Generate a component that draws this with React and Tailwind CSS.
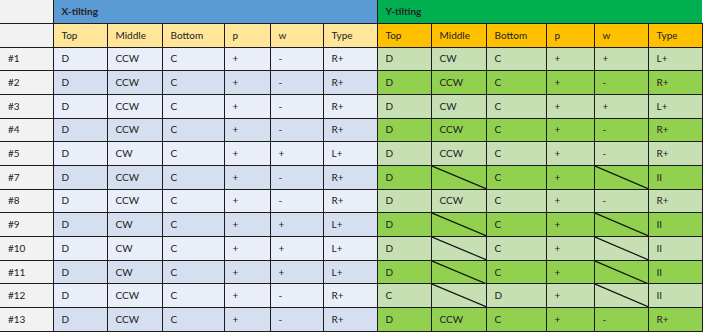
const xRows = [
  ['#1', 'D', 'CCW', 'C', '+', '-', 'R+'],
  ['#2', 'D', 'CCW', 'C', '+', '-', 'R+'],
  ['#3', 'D', 'CCW', 'C', '+', '-', 'R+'],
  ['#4', 'D', 'CCW', 'C', '+', '-', 'R+'],
  ['#5', 'D', 'CW', 'C', '+', '+', 'L+'],
  ['#7', 'D', 'CCW', 'C', '+', '-', 'R+'],
  ['#8', 'D', 'CCW', 'C', '+', '-', 'R+'],
  ['#9', 'D', 'CW', 'C', '+', '+', 'L+'],
  ['#10', 'D', 'CW', 'C', '+', '+', 'L+'],
  ['#11', 'D', 'CW', 'C', '+', '+', 'L+'],
  ['#12', 'D', 'CCW', 'C', '+', '-', 'R+'],
  ['#13', 'D', 'CCW', 'C', '+', '-', 'R+'],
]

// null = cell crossed out with a diagonal
const yRows = [
  ['D', 'CW', 'C', '+', '+', 'L+'],
  ['D', 'CCW', 'C', '+', '-', 'R+'],
  ['D', 'CW', 'C', '+', '+', 'L+'],
  ['D', 'CCW', 'C', '+', '-', 'R+'],
  ['D', 'CCW', 'C', '+', '-', 'R+'],
  ['D', null, 'C', '+', null, 'II'],
  ['D', 'CCW', 'C', '+', '-', 'R+'],
  ['D', null, 'C', '+', null, 'II'],
  ['D', null, 'C', '+', null, 'II'],
  ['D', null, 'C', '+', null, 'II'],
  ['C', null, 'D', '+', null, 'II'],
  ['D', 'CCW', 'C', '+', '-', 'R+'],
]

const heads = ['Top', 'Middle', 'Bottom', 'p', 'w', 'Type']
const widths = [53, 54, 55, 62, 46, 53, 54, 54, 55, 60, 48, 54, 54]

function Slash() {
  return (
    <svg className="absolute inset-0 w-full h-full" viewBox="0 0 100 100" preserveAspectRatio="none">
      <line x1="0" y1="0" x2="100" y2="100" stroke="#111" strokeWidth="1.2" vectorEffect="non-scaling-stroke" />
    </svg>
  )
}

export default function App() {
  const cell = 'relative border-r border-b border-[#1c1c1c] pl-2 text-left align-middle whitespace-nowrap'
  return (
    <div className="w-[703px] h-[333px] bg-white overflow-hidden text-[10px] text-[#222]" style={{ fontFamily: 'Lato, "Open Sans", sans-serif' }}>
      <table className="table-fixed border-collapse w-[702px]">
        <colgroup>
          {widths.map((w, i) => <col key={i} style={{ width: w }} />)}
        </colgroup>
        <tbody>
          <tr className="h-[23px]">
            <td className="border-r border-b border-[#1c1c1c] bg-[#f2f2f2]"></td>
            <td colSpan={6} className="border-r border-b border-[#1c1c1c] bg-[#5b9bd5] pl-2 font-bold">X-tilting</td>
            <td colSpan={6} className="border-b border-[#1c1c1c] bg-[#00b050] pl-2 font-bold">Y-tilting</td>
          </tr>
          <tr className="h-[24px]">
            <td className={`${cell} bg-[#f2f2f2]`}></td>
            {heads.map(h => <td key={'x' + h} className={`${cell} bg-[#ffe699]`}>{h}</td>)}
            {heads.map(h => <td key={'y' + h} className={`${cell} bg-[#ffc000]`}>{h}</td>)}
          </tr>
          {xRows.map((r, i) => {
            const odd = i % 2 === 1
            const xBg = odd ? 'bg-[#d6dff0]' : 'bg-[#e9eef8]'
            const yBg = odd ? 'bg-[#92d050]' : 'bg-[#c6e0b4]'
            return (
              <tr key={r[0]} className="h-[23.7px]">
                <td className={`${cell} bg-[#f2f2f2]`}>{r[0]}</td>
                {r.slice(1).map((v, j) => <td key={j} className={`${cell} ${xBg}`}>{v}</td>)}
                {yRows[i].map((v, j) => (
                  <td key={'y' + j} className={`${cell} ${yBg}`}>
                    {v === null ? <Slash /> : v}
                  </td>
                ))}
              </tr>
            )
          })}
        </tbody>
      </table>
    </div>
  )
}
